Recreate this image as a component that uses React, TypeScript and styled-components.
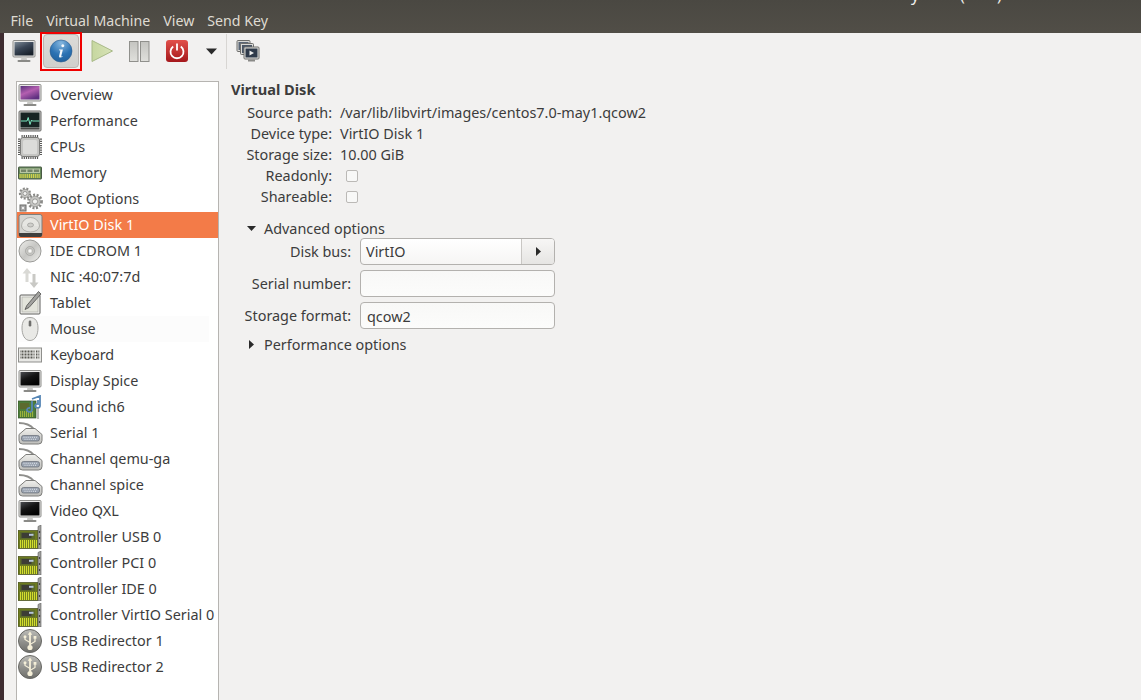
import React, { useId } from "react";
import styled, { createGlobalStyle } from "styled-components";

const Global = createGlobalStyle`
  html, body { margin: 0; padding: 0; width: 1141px; height: 700px; overflow: hidden; background: #f2f1f0; }
  body { font-family: "Noto Sans", "Open Sans", sans-serif; font-size: 14.4px; color: #3c3c3c; }
`;

const Page = styled.div`
  width: 1141px; height: 700px; display: flex; overflow: hidden; position: relative;
`;
const Stripe = styled.div`
  width: 4px; flex: none; background: #3e2c30;
`;
const Window = styled.div`
  flex: 1; display: flex; flex-direction: column; min-width: 0;
`;
const TitleBar = styled.div`
  position: absolute; top: 0; left: 0; right: 0; height: 33px;
  background: linear-gradient(#4a4842, #514e47);
  display: flex; align-items: flex-end; padding-left: 10.5px; gap: 13px;
  box-sizing: border-box; padding-bottom: 3px; overflow: hidden;
`;
const MenuSpacer = styled.div`
  height: 33px; flex: none;
`;
const MenuLabel = styled.span`
  color: #dfdbd2; font-size: 14.2px; line-height: 19px;
`;
const TitleScrap = styled.span<{ $x: number }>`
  position: absolute; top: -14px; left: ${p => p.$x}px; color: #f0efec; font-size: 16px; line-height: 18px;
`;
const Toolbar = styled.div`
  height: 40px; display: flex; align-items: flex-start; padding-left: 8px; box-sizing: border-box; flex: none;
`;
const ToolSlot = styled.div<{ $w: number; $ml?: number }>`
  width: ${p => p.$w}px; margin-left: ${p => p.$ml ?? 0}px; height: 36px; flex: none;
  display: flex; align-items: center; justify-content: center; position: relative;
`;
const ActiveTool = styled(ToolSlot)`
  background: linear-gradient(#dcdbd8, #d0cfcc);
  border-radius: 4px; border: 1px solid #b8b6b2; box-sizing: border-box;
  margin-top: 1px; height: 34px;
  &::after {
    content: ""; position: absolute; left: -4px; top: -3px; right: -4px; bottom: -4px;
    border: 2px solid #f00000; pointer-events: none;
  }
`;
const Separator = styled.div`
  width: 1px; height: 35px; background: #d8d6d3; margin-left: 9px; margin-top: 1px; flex: none;
`;
const Body = styled.div`
  flex: 1; display: flex; min-height: 0; padding: 8px 0 0 12px;
`;
const DeviceList = styled.div`
  width: 203px; box-sizing: border-box; flex: none; background: #fff;
  border: 1px solid #b6b4b1; border-bottom: none;
`;
const DeviceRow = styled.div<{ $selected?: boolean; $hover?: boolean }>`
  height: 26px; display: flex; align-items: center; white-space: nowrap;
  background: ${p => (p.$selected ? "#f37b48" : p.$hover ? "#fcfcfc" : "transparent")};
  color: ${p => (p.$selected ? "#ffffff" : "#3c3c3c")};
  margin-right: ${p => (p.$hover ? "9px" : "0")};
`;
const DeviceIconBox = styled.div`
  width: 26px; height: 26px; flex: none; display: flex; align-items: center; justify-content: center;
`;
const DeviceName = styled.span`
  margin-left: 7px; font-size: 14.4px; line-height: 20px;
`;
const Details = styled.div`
  flex: 1; padding: 0 0 0 12px; min-width: 0;
`;
const SectionTitle = styled.div`
  font-weight: 700; font-size: 14.6px; line-height: 17px; color: #3c3c3c;
`;
const InfoGrid = styled.div`
  display: grid; grid-template-columns: 101px auto; grid-auto-rows: 21px; column-gap: 8px;
  align-items: center; justify-content: start; margin-top: 4px; margin-bottom: 12px;
`;
const FieldLabel = styled.div`
  text-align: right; font-size: 14.4px; white-space: nowrap; line-height: 19px;
`;
const FieldValue = styled.div`
  font-size: 14.4px; white-space: nowrap; line-height: 19px;
`;
const Check = styled.div`
  width: 12px; height: 12px; box-sizing: border-box; margin-left: 6px;
  border: 1px solid #bbb9b6; border-radius: 2px; background: #f8f8f7;
`;
const Expander = styled.div`
  display: flex; align-items: center; height: 19px; margin-left: 16px; font-size: 14.4px; gap: 8px;
`;
const ArrowBox = styled.div`
  width: 9px; height: 9px; flex: none; display: flex; align-items: center; justify-content: center;
`;
const FormGrid = styled.div`
  display: grid; grid-template-columns: 108px 195px; column-gap: 9px; row-gap: 5px; margin: 0 0 6px 12px;
  align-items: center;
`;
const Combo = styled.div`
  height: 27px; box-sizing: border-box; border: 1px solid #b3b1ae; border-radius: 4px;
  background: linear-gradient(#ffffff, #f6f5f4); display: flex; align-items: stretch;
`;
const ComboText = styled.div`
  flex: 1; padding-left: 5px; line-height: 25px; font-size: 14.4px;
`;
const ComboButton = styled.div`
  width: 32px; border-left: 1px solid #c9c7c4; display: flex; align-items: center; justify-content: center;
  background: linear-gradient(#f7f6f5, #e6e5e3); border-radius: 0 3px 3px 0;
`;
const Entry = styled.div`
  height: 27px; box-sizing: border-box; border: 1px solid #b3b1ae; border-radius: 4px;
  background: linear-gradient(#f8f8f7, #fcfcfb);
  padding-left: 6px; line-height: 27px; font-size: 14.4px;
`;

const Arrow = ({ dir, size = 9 }: { dir: "right" | "down"; size?: number }) => (
  <svg width={size} height={size} viewBox="0 0 9 9">
    <path d={dir === "down" ? "M0 2h9L4.500 7z" : "M2 0l5 4.500L2 9z"} fill="#2a2a2a" />
  </svg>
);

const Monitor = ({ tone }: { tone: "purple" | "black" | "steel" }) => {
  const id = useId();
  const stops = {
    purple: ["#55307a", "#b45fb0", "#5f3080"],
    black: ["#4a4c50", "#141414", "#020202"],
    steel: ["#7d8a96", "#3a4656", "#1a222c"],
  }[tone];
  return (
    <svg width="24" height="24" viewBox="0 0 24 24">
      <defs>
        <linearGradient id={id} x1="0" y1="0" x2=".6" y2="1">
          <stop offset="0" stopColor={stops[0]} />
          <stop offset=".5" stopColor={stops[1]} />
          <stop offset="1" stopColor={stops[2]} />
        </linearGradient>
      </defs>
      <rect x="1" y="1.500" width="22" height="16.500" rx="1" fill="#e8e8e6" stroke="#8d8d8a" />
      <rect x="2.500" y="3" width="19" height="13.500" fill={`url(#${id})`} />
      <path d="M9.500 18h5l.5 3H9z" fill="#c9c9c6" />
      <rect x="5.500" y="21" width="13" height="2" rx="1" fill="#8a8a87" />
    </svg>
  );
};

const Perf = () => (
  <svg width="24" height="24" viewBox="0 0 24 24">
    <rect x="1" y="2" width="22" height="20" rx="1" fill="#c8c8c6" stroke="#6a6a68" />
    <rect x="2.500" y="3.500" width="19" height="15" fill="#172423" />
    <path d="M3 12h6l1.200-3.500 1.800 7 1.500-4.500 .8 1h7" fill="none" stroke="#7be6bf" strokeWidth="1" />
    <rect x="2.500" y="19" width="19" height="1.500" fill="#4a4a48" />
  </svg>
);

const Cpu = () => (
  <svg width="24" height="24" viewBox="0 0 24 24">
    <path d="M0.500 3.500v17M23.500 3.500v17" stroke="#5a5a58" strokeWidth="3" strokeDasharray="1.200 1" />
    <path d="M3.500 1h17M3.500 23h17" stroke="#5a5a58" strokeWidth="3" strokeDasharray="1.200 1" />
    <rect x="2.500" y="2.500" width="19" height="19" rx="2.500" fill="#c5c5c2" stroke="#7c7c79" />
    <rect x="5" y="5" width="14" height="14" rx="1.500" fill="#dcdcd9" />
  </svg>
);

const Memory = () => (
  <svg width="24" height="24" viewBox="0 0 24 24">
    <rect x="0.500" y="6" width="23" height="12" rx=".5" fill="#64875a" stroke="#495a44" />
    <rect x="2" y="7.500" width="20" height="4.500" fill="#b7c7a4" />
    <path d="M3 9.700h18" stroke="#3f4f3a" strokeWidth="2.500" strokeDasharray="5 1.500" opacity=".55" />
    <path d="M1.500 15h21" stroke="#d0d24c" strokeWidth="4" strokeDasharray="1.200 .7" />
  </svg>
);

const Gear = ({ cx, cy, r }: { cx: number; cy: number; r: number }) => (
  <g>
    <circle cx={cx} cy={cy} r={r * 1.05} fill="none" stroke="#8b8b88" strokeWidth={r * 0.45} strokeDasharray="2 1.500" />
    <circle cx={cx} cy={cy} r={r * 0.85} fill="#c6c6c3" stroke="#8d8d8a" strokeWidth=".7" />
    <circle cx={cx} cy={cy} r={r * 0.42} fill="#f2f2f0" stroke="#8c8c89" strokeWidth=".8" />
  </g>
);
const Gears = () => (
  <svg width="25" height="25" viewBox="0 0 25 25">
    <Gear cx={7} cy={6.500} r={4.800} />
    <Gear cx={17} cy={14.500} r={6.200} />
    <rect x="2" y="18" width="6" height="6" fill="#aaa" stroke="#6c6c6a" />
    <rect x="4" y="20" width="2" height="2" fill="#eee" />
  </svg>
);

const Disk = () => (
  <svg width="25" height="25" viewBox="0 0 25 25">
    <rect x="1" y="1.500" width="23" height="22" rx="2" fill="#d5d5d1" stroke="#7f7f7c" />
    <path d="M3.500 13a9 8.500 0 0 1 18 0" fill="#e6e6e2" stroke="#9c9c98" strokeWidth=".7" />
    <path d="M3.500 13a9 6 0 0 0 18 0" fill="#e0e0dc" stroke="#9c9c98" strokeWidth=".7" />
    <ellipse cx="12.500" cy="12" rx="3" ry="2" fill="#cfcfcb" stroke="#8f8f8b" strokeWidth=".6" />
    <path d="M1 20h23v2a2 2 0 0 1-2 2H3a2 2 0 0 1-2-2z" fill="#3f3f3d" />
  </svg>
);

const Cd = () => {
  const id = useId();
  return (
    <svg width="24" height="24" viewBox="0 0 24 24">
      <defs>
        <linearGradient id={id} x1="0" y1="0" x2="1" y2="1">
          <stop offset="0" stopColor="#efefec" />
          <stop offset=".5" stopColor="#c6c6c3" />
          <stop offset="1" stopColor="#efefec" />
        </linearGradient>
      </defs>
      <circle cx="12" cy="12" r="11" fill={`url(#${id})`} stroke="#9b9b98" />
      <circle cx="12" cy="12" r="4.500" fill="#c7c7c4" stroke="#989895" strokeWidth=".6" />
      <circle cx="12" cy="12" r="2.600" fill="#e3e3e0" stroke="#9a9a97" strokeWidth=".5" />
      <circle cx="12" cy="12" r="1.100" fill="#fff" />
    </svg>
  );
};

const Nic = () => (
  <svg width="24" height="24" viewBox="0 0 24 24">
    <path d="M9 3l4.500 5.500h-3V17h-3V8.500h-3z" fill="#d9d9d5" />
    <path d="M16 23l-4.500-5.500h3V9h3v8.500h3z" fill="#c9c9c5" />
  </svg>
);

const Tablet = () => (
  <svg width="24" height="24" viewBox="0 0 24 24">
    <rect x="2" y="4" width="20" height="19" rx="1" fill="#f2f2ee" stroke="#5e5e5c" />
    <rect x="4" y="6" width="16" height="15" fill="#e3e4db" stroke="#a5a5a2" strokeWidth=".6" />
    <path d="M20.500 .500L23 3L11 16.500L7 18.500L8.800 14.500z" fill="#a2a29f" stroke="#4e4e4c" strokeWidth=".8" />
  </svg>
);

const Mouse = () => (
  <svg width="24" height="24" viewBox="0 0 24 24">
    <path d="M12 .500c5.500 0 8 4 8 10.500s-2.500 12.500-8 12.500-8-6-8-12.500S6.500 .500 12 .500z" fill="#e9e9e6" stroke="#a5a5a2" />
    <rect x="10.700" y="3.500" width="2.600" height="6" rx="1.300" fill="#6e6e6c" />
  </svg>
);

const Keyboard = () => (
  <svg width="24" height="24" viewBox="0 0 24 24">
    <rect x="0.500" y="5" width="23" height="14" fill="#e8e8e5" stroke="#8f8f8c" />
    <path d="M2.500 8.500h14M2.500 11.500h14M2.500 14.500h14" stroke="#5a5a54" strokeWidth="2.200" strokeDasharray="1 .5" />
    <path d="M18 8.500h3.500M18 11.500h3.500M18 14.500h3.500" stroke="#5a5a54" strokeWidth="2" strokeDasharray="1 .6" />
  </svg>
);

const Controller = () => (
  <svg width="24" height="24" viewBox="0 0 24 24">
    <rect x="0" y="5.500" width="20" height="18" fill="#6d7a1f" stroke="#42491c" strokeWidth=".7" />
    <path d="M2 19h17" stroke="#d2dd2e" strokeWidth="8" strokeDasharray="1.100 .9" />
    <rect x="2" y="7" width="15" height="7" fill="#5b6a2a" />
    <rect x="3.500" y="8" width="10" height="5" rx=".5" fill="#3c3c36" />
    <rect x="11" y="8.800" width="4.500" height="2" fill="#b5c4d8" />
    <path d="M20 1.500l3-1.500v24h-3z" fill="#a2a29f" stroke="#5d5d5a" strokeWidth=".6" />
    <path d="M21.500 6v2M21.500 12v2M21.500 18v2" stroke="#444" strokeWidth="1.200" />
  </svg>
);

const Sound = () => (
  <svg width="24" height="24" viewBox="0 0 24 24">
    <rect x="0" y="6" width="18" height="17" fill="#4d7c3a" stroke="#34502a" strokeWidth=".7" />
    <path d="M2 19h14" stroke="#9cb23c" strokeWidth="6" strokeDasharray="1.100 .9" />
    <rect x="2" y="8" width="9" height="6" fill="#5c6a2e" />
    <path d="M14 6V15a2.500 2 0 1 1-2-2" fill="none" stroke="#5686b5" strokeWidth="1.800" />
    <path d="M14 4l8-3v10a2.500 2 0 1 1-2-2V5" fill="none" stroke="#5686b5" strokeWidth="1.800" />
    <path d="M20 13v11" stroke="#8a8a88" strokeWidth="1.200" />
  </svg>
);

const Serial = () => {
  const id = useId();
  return (
    <svg width="25" height="25" viewBox="0 0 25 25">
      <defs>
        <linearGradient id={id} x1="0" y1="0" x2="0" y2="1">
          <stop offset="0" stopColor="#efefec" />
          <stop offset="1" stopColor="#bdbdba" />
        </linearGradient>
      </defs>
      <path d="M1 2c6 0 11 1.500 15 6" fill="none" stroke="#8f8f8c" strokeWidth="1.800" />
      <path d="M1 13.500L8 7.500h9l7 6v6a3.500 3.500 0 0 1-3.500 3.500H4.500A3.500 3.500 0 0 1 1 19.500z" fill={`url(#${id})`} stroke="#7d7d7a" />
      <rect x="3.500" y="14.500" width="18" height="5.500" rx="2" fill="#9aa3b0" stroke="#646a74" strokeWidth=".7" />
      <path d="M5.500 16.300h14M6.500 18.300h12" stroke="#e8ecf2" strokeWidth=".9" strokeDasharray="1 1.100" />
    </svg>
  );
};

const Usb = () => {
  const id = useId();
  return (
    <svg width="24" height="24" viewBox="0 0 24 24">
      <defs>
        <linearGradient id={id} x1="0" y1="0" x2="0" y2="1">
          <stop offset="0" stopColor="#bdbdb9" />
          <stop offset=".55" stopColor="#8f8f8b" />
          <stop offset="1" stopColor="#6e6e6a" />
        </linearGradient>
      </defs>
      <circle cx="12" cy="12" r="11.500" fill={`url(#${id})`} stroke="#666663" />
      <path d="M12 2.500l2.300 3.200h-1.400v11h-1.800V5.700H9.700z" fill="#f5efd8" />
      <circle cx="12" cy="18.500" r="2.600" fill="#f5efd8" />
      <path d="M12 13.500L7 10.500V8.500M12 15.500l5-3V9.500" fill="none" stroke="#f5efd8" strokeWidth="1.200" />
      <circle cx="7" cy="7.800" r="1.500" fill="#f5efd8" />
      <rect x="15.600" y="7" width="2.800" height="2.800" fill="#f5efd8" />
    </svg>
  );
};

const InfoIcon = () => {
  const id = useId();
  return (
    <svg width="24" height="24" viewBox="0 0 24 24">
      <defs>
        <radialGradient id={id} cx=".5" cy=".15" r=".95">
          <stop offset="0" stopColor="#85b6de" />
          <stop offset=".55" stopColor="#2c72b3" />
          <stop offset="1" stopColor="#1f5c96" />
        </radialGradient>
      </defs>
      <circle cx="12" cy="12" r="11" fill={`url(#${id})`} stroke="#2b5d8e" strokeWidth=".6" />
      <path d="M13.800 5.200a1.500 1.500 0 1 1-.01 0zM10 10.400h3.900l-1.700 6.800c-.1.500.4.500 1.400 0l.1.600c-1.800 1.100-4 1.200-3.600-.7l1.300-5.600-1.400-.3z" fill="#f7f9fb" />
    </svg>
  );
};
const PlayIcon = () => {
  const id = useId();
  return (
    <svg width="24" height="24" viewBox="0 0 24 24">
      <defs>
        <linearGradient id={id} x1="0" y1="0" x2="1" y2="0">
          <stop offset="0" stopColor="#c6d79f" />
          <stop offset="1" stopColor="#d8e3b8" />
        </linearGradient>
      </defs>
      <path d="M2 1.500L22.500 12 2 22.500z" fill={`url(#${id})`} stroke="#a9ba88" strokeWidth="1" />
    </svg>
  );
};
const PauseIcon = () => {
  const id = useId();
  return (
    <svg width="24" height="24" viewBox="0 0 24 24">
      <defs>
        <linearGradient id={id} x1="0" y1="0" x2="0" y2="1">
          <stop offset="0" stopColor="#c4c4c0" />
          <stop offset="1" stopColor="#e0e0dc" />
        </linearGradient>
      </defs>
      <rect x="2.500" y="2.500" width="8.500" height="20" fill={`url(#${id})`} stroke="#90908c" />
      <rect x="13.500" y="2.500" width="8.500" height="20" fill={`url(#${id})`} stroke="#90908c" />
    </svg>
  );
};
const PowerIcon = () => {
  const id = useId();
  return (
    <svg width="24" height="24" viewBox="0 0 24 24">
      <defs>
        <linearGradient id={id} x1="0" y1="0" x2="0" y2="1">
          <stop offset="0" stopColor="#e2504a" />
          <stop offset="1" stopColor="#a5181c" />
        </linearGradient>
      </defs>
      <rect x="1" y="1" width="22" height="22" rx="3" fill={`url(#${id})`} />
      <path d="M8.200 7.500a6.500 6.500 0 1 0 7.600 0" fill="none" stroke="#fff" strokeWidth="1.800" />
      <path d="M12 4.500v7" stroke="#fff" strokeWidth="1.800" />
    </svg>
  );
};
const CloneIcon = () => (
  <svg width="24" height="24" viewBox="0 0 24 24">
    <rect x="1" y="1.500" width="13" height="11" rx="1" fill="#d9d9d6" stroke="#6e6e6c" />
    <rect x="2.500" y="3" width="10" height="8" fill="#5a6676" />
    <rect x="4.500" y="4.500" width="13" height="11" rx="1" fill="#d9d9d6" stroke="#6e6e6c" />
    <rect x="6" y="6" width="10" height="8" fill="#4a5666" />
    <rect x="8" y="8" width="15" height="12" rx="1" fill="#e2e2df" stroke="#6e6e6c" />
    <rect x="9.500" y="9.500" width="12" height="9" fill="#2f3a4a" />
    <path d="M13.500 11.500l4.500 2.500-4.500 2.500z" fill="#eeeeec" />
    <rect x="12" y="20.500" width="7" height="2" fill="#8a8a87" />
  </svg>
);

type Dev = { name: string; icon: React.ReactNode; selected?: boolean; hover?: boolean };

const devices: Dev[] = [
  { name: "Overview", icon: <Monitor tone="purple" /> },
  { name: "Performance", icon: <Perf /> },
  { name: "CPUs", icon: <Cpu /> },
  { name: "Memory", icon: <Memory /> },
  { name: "Boot Options", icon: <Gears /> },
  { name: "VirtIO Disk 1", icon: <Disk />, selected: true },
  { name: "IDE CDROM 1", icon: <Cd /> },
  { name: "NIC :40:07:7d", icon: <Nic /> },
  { name: "Tablet", icon: <Tablet /> },
  { name: "Mouse", icon: <Mouse />, hover: true },
  { name: "Keyboard", icon: <Keyboard /> },
  { name: "Display Spice", icon: <Monitor tone="black" /> },
  { name: "Sound ich6", icon: <Sound /> },
  { name: "Serial 1", icon: <Serial /> },
  { name: "Channel qemu-ga", icon: <Serial /> },
  { name: "Channel spice", icon: <Serial /> },
  { name: "Video QXL", icon: <Monitor tone="black" /> },
  { name: "Controller USB 0", icon: <Controller /> },
  { name: "Controller PCI 0", icon: <Controller /> },
  { name: "Controller IDE 0", icon: <Controller /> },
  { name: "Controller VirtIO Serial 0", icon: <Controller /> },
  { name: "USB Redirector 1", icon: <Usb /> },
  { name: "USB Redirector 2", icon: <Usb /> },
];

export default function App() {
  return (
    <Page>
      <Global />
      <TitleBar>
        <MenuLabel>File</MenuLabel>
        <MenuLabel>Virtual Machine</MenuLabel>
        <MenuLabel>View</MenuLabel>
        <MenuLabel>Send Key</MenuLabel>
        <TitleScrap $x={911}>y</TitleScrap>
        <TitleScrap $x={960}>(</TitleScrap>
        <TitleScrap $x={997}>)</TitleScrap>
      </TitleBar>
      <Stripe />
      <Window>
        <MenuSpacer />
        <Toolbar>
          <ToolSlot $w={24}><Monitor tone="steel" /></ToolSlot>
          <ActiveTool $w={36} $ml={7}><InfoIcon /></ActiveTool>
          <ToolSlot $w={24} $ml={11}><PlayIcon /></ToolSlot>
          <ToolSlot $w={24} $ml={13}><PauseIcon /></ToolSlot>
          <ToolSlot $w={24} $ml={14}><PowerIcon /></ToolSlot>
          <ToolSlot $w={12} $ml={16}><Arrow dir="down" size={11} /></ToolSlot>
          <Separator />
          <ToolSlot $w={24} $ml={9}><CloneIcon /></ToolSlot>
        </Toolbar>
        <Body>
          <DeviceList>
            {devices.map(d => (
              <DeviceRow key={d.name} $selected={d.selected} $hover={d.hover}>
                <DeviceIconBox>{d.icon}</DeviceIconBox>
                <DeviceName>{d.name}</DeviceName>
              </DeviceRow>
            ))}
          </DeviceList>
          <Details>
            <SectionTitle>Virtual Disk</SectionTitle>
            <InfoGrid>
              <FieldLabel>Source path:</FieldLabel>
              <FieldValue>/var/lib/libvirt/images/centos7.0-may1.qcow2</FieldValue>
              <FieldLabel>Device type:</FieldLabel>
              <FieldValue>VirtIO Disk 1</FieldValue>
              <FieldLabel>Storage size:</FieldLabel>
              <FieldValue>10.00 GiB</FieldValue>
              <FieldLabel>Readonly:</FieldLabel>
              <Check />
              <FieldLabel>Shareable:</FieldLabel>
              <Check />
            </InfoGrid>
            <Expander>
              <ArrowBox><Arrow dir="down" /></ArrowBox>
              Advanced options
            </Expander>
            <FormGrid>
              <FieldLabel>Disk bus:</FieldLabel>
              <Combo>
                <ComboText>VirtIO</ComboText>
                <ComboButton><Arrow dir="right" /></ComboButton>
              </Combo>
              <FieldLabel>Serial number:</FieldLabel>
              <Entry />
              <FieldLabel>Storage format:</FieldLabel>
              <Entry>qcow2</Entry>
            </FormGrid>
            <Expander>
              <ArrowBox><Arrow dir="right" /></ArrowBox>
              Performance options
            </Expander>
          </Details>
        </Body>
      </Window>
    </Page>
  );
}
